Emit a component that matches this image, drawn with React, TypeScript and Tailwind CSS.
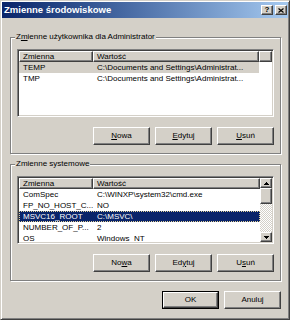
import React from "react";

type Row = { name: string; value: string; sel?: "gray" | "blue" };

const userVars: Row[] = [
  { name: "TEMP", value: "C:\\Documents and Settings\\Administrat...", sel: "gray" },
  { name: "TMP", value: "C:\\Documents and Settings\\Administrat..." },
];

const sysVars: Row[] = [
  { name: "ComSpec", value: "C:\\WINXP\\system32\\cmd.exe" },
  { name: "FP_NO_HOST_C...", value: "NO" },
  { name: "MSVC16_ROOT", value: "C:\\MSVC\\", sel: "blue" },
  { name: "NUMBER_OF_P...", value: "2" },
  { name: "OS", value: "Windows_NT" },
];

// classic 3d raised edge
const raised =
  "bg-[#d4d0c8] border border-t-white border-l-white border-r-[#404040] border-b-[#404040] shadow-[inset_-1px_-1px_0_#808080]";

function Arrow({ down }: { down?: boolean }) {
  return (
    <svg width="5" height="3" viewBox="0 0 5 3" className={down ? "rotate-180" : ""}>
      <path d="M2 0h1v1h1v1h1v1H0V2h1V1h1z" fill="#000" />
    </svg>
  );
}

function Button({ children, isDefault }: { children: React.ReactNode; isDefault?: boolean }) {
  if (isDefault) {
    return (
      <div className="w-[57px] h-[18px] border border-black flex">
        <div className={`${raised} flex-1 flex items-center justify-center`}>{children}</div>
      </div>
    );
  }
  return <div className={`${raised} w-[57px] h-[18px] flex items-center justify-center`}>{children}</div>;
}

function VarList({ rows, scroll }: { rows: Row[]; scroll?: boolean }) {
  return (
    <div className="w-[257px] h-[68px] bg-white border border-t-[#808080] border-l-[#808080] border-r-white border-b-white p-[1px] shadow-[inset_1px_1px_0_#404040,inset_-1px_-1px_0_#d4d0c8] flex">
      <div className="flex-1 min-w-0 flex flex-col overflow-hidden">
        <div className="flex h-[11px] shrink-0 leading-[9px]">
          <div className={`${raised} w-[74px] pl-[3px]`}>Zmienna</div>
          <div className={`${raised} pl-[3px] ${scroll ? "flex-1" : "w-[166px]"}`}>Wartość</div>
          {!scroll && <div className={`${raised} flex-1`} />}
        </div>
        {rows.map((r) => (
          <div
            key={r.name}
            className={`flex h-[11px] shrink-0 leading-[11px] ${scroll ? "w-full" : "w-[240px]"} ${
              r.sel === "gray" ? "bg-[#d4d0c8]" : ""
            } ${
              r.sel === "blue"
                ? "bg-[#0a246a] text-white outline outline-1 outline-dotted outline-[#e6d49a] -outline-offset-1"
                : ""
            }`}
          >
            <div className="w-[74px] shrink-0 pl-[4px] whitespace-nowrap overflow-hidden">{r.name}</div>
            <div className="flex-1 pl-[4px] whitespace-nowrap overflow-hidden">{r.value}</div>
          </div>
        ))}
      </div>
      {scroll && (
        <div className="w-[12px] flex flex-col shrink-0">
          <div className={`${raised} h-[10px] flex items-center justify-center`}>
            <Arrow />
          </div>
          <div className={`${raised} h-[16px]`} />
          <div className="flex-1 bg-[repeating-conic-gradient(#ffffff_0%_25%,#d4d0c8_0%_50%)] bg-[length:2px_2px]" />
          <div className={`${raised} h-[10px] flex items-center justify-center`}>
            <Arrow down />
          </div>
        </div>
      )}
    </div>
  );
}

function Group({
  label,
  rows,
  scroll,
  buttons,
}: {
  label: React.ReactNode;
  rows: Row[];
  scroll?: boolean;
  buttons: React.ReactNode[];
}) {
  return (
    <fieldset className="w-[271px] m-0 p-0 min-w-0 border border-[#808080] shadow-[1px_1px_0_#ffffff,inset_1px_1px_0_#ffffff]">
      <legend className="ml-[4px] px-[1px] leading-[12px] bg-[#d4d0c8]">{label}</legend>
      <div className="px-[6px] pb-[8px]">
        <div className="mt-[6px]">
          <VarList rows={rows} scroll={scroll} />
        </div>
        <div className="flex justify-end gap-[5px] mt-[10px]">
          {buttons.map((b, i) => (
            <Button key={i}>{b}</Button>
          ))}
        </div>
      </div>
    </fieldset>
  );
}

export default function App() {
  return (
    <div className="w-[290px] h-[320px] bg-[#d4d0c8] border border-t-[#d4d0c8] border-l-[#d4d0c8] border-r-[#404040] border-b-[#404040] shadow-[inset_1px_1px_0_#ffffff,inset_-1px_-1px_0_#808080] p-[1px] flex flex-col font-['Liberation_Sans',Arial,sans-serif] text-[8px] text-black select-none">
      <div className="h-[16px] shrink-0 flex items-center bg-linear-to-r from-[#0a246a] to-[#a6caf0] pl-[2px] pr-[1px]">
        <div className="flex-1 text-white font-bold text-[9.5px] leading-none whitespace-nowrap">
          Zmienne środowiskowe
        </div>
        <div className="flex gap-[2px]">
          <div className={`${raised} w-[12px] h-[10px] flex items-center justify-center font-bold text-[8px] leading-none`}>
            ?
          </div>
          <div className={`${raised} w-[12px] h-[10px] flex items-center justify-center`}>
            <svg width="6" height="5" viewBox="0 0 6 5">
              <path d="M0.5 0.5l5 4M5.5 0.5l-5 4" stroke="#000" strokeWidth="1.2" />
            </svg>
          </div>
        </div>
      </div>

      <div className="flex flex-col pl-[8px] pt-[13px]">
        <Group
          label={
            <>
              Z<span className="underline">m</span>ienne użytkownika dla Administrator
            </>
          }
          rows={userVars}
          buttons={[
            <>
              <span className="underline">N</span>owa
            </>,
            <>
              <span className="underline">E</span>dytuj
            </>,
            <>
              <span className="underline">U</span>suń
            </>,
          ]}
        />
        <div className="mt-[4px]">
          <Group
            label={<>Zmienne systemowe</>}
            rows={sysVars}
            scroll
            buttons={[
              <>
                No<span className="underline">w</span>a
              </>,
              <>
                Ed<span className="underline">y</span>tuj
              </>,
              <>
                U<span className="underline">s</span>uń
              </>,
            ]}
          />
        </div>
        <div className="w-[271px] flex justify-end gap-[5px] mt-[10px]">
          <Button isDefault>OK</Button>
          <Button>Anuluj</Button>
        </div>
      </div>
    </div>
  );
}
